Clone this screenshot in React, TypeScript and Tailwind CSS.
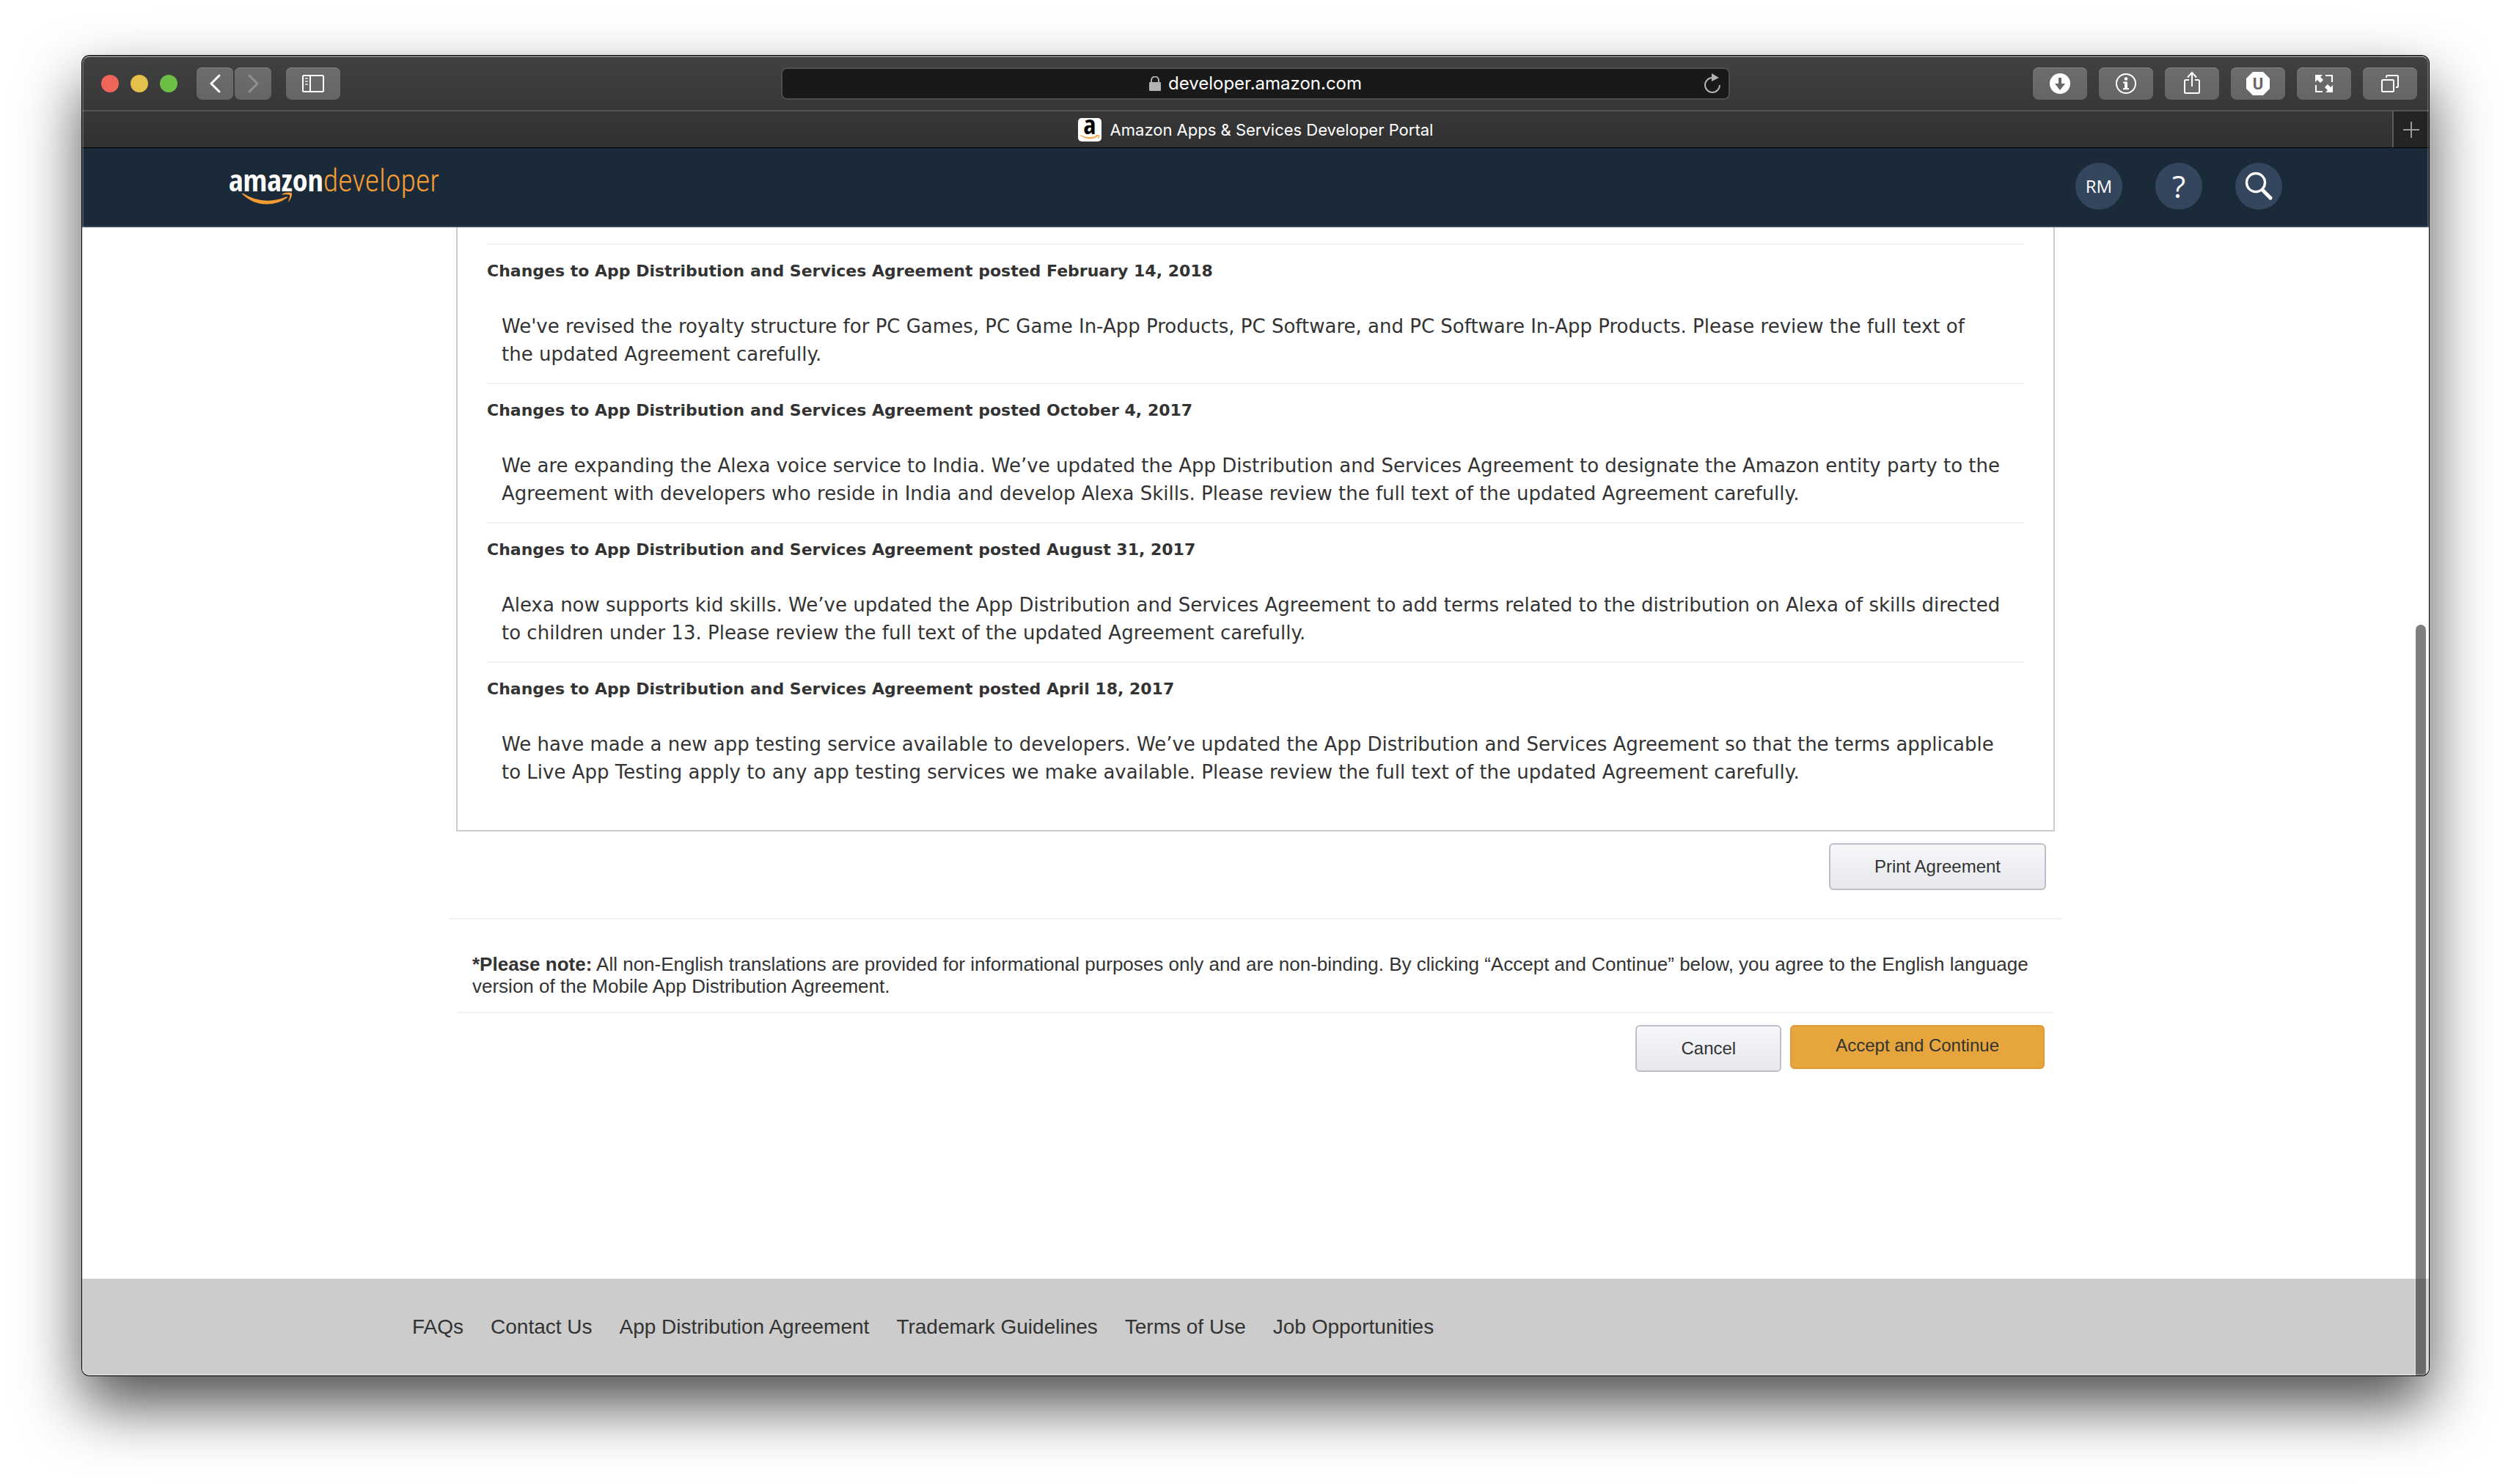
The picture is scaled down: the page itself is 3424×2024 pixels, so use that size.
import type { ReactNode } from "react";

const CHANGES = [
  {
    date: "February 14, 2018",
    body: "We've revised the royalty structure for PC Games, PC Game In-App Products, PC Software, and PC Software In-App Products. Please review the full text of\nthe updated Agreement carefully.",
  },
  {
    date: "October 4, 2017",
    body: "We are expanding the Alexa voice service to India. We’ve updated the App Distribution and Services Agreement to designate the Amazon entity party to the\nAgreement with developers who reside in India and develop Alexa Skills. Please review the full text of the updated Agreement carefully.",
  },
  {
    date: "August 31, 2017",
    body: "Alexa now supports kid skills. We’ve updated the App Distribution and Services Agreement to add terms related to the distribution on Alexa of skills directed\nto children under 13. Please review the full text of the updated Agreement carefully.",
  },
  {
    date: "April 18, 2017",
    body: "We have made a new app testing service available to developers. We’ve updated the App Distribution and Services Agreement so that the terms applicable\nto Live App Testing apply to any app testing services we make available. Please review the full text of the updated Agreement carefully.",
  },
];

const FOOTER_LINKS = [
  "FAQs",
  "Contact Us",
  "App Distribution Agreement",
  "Trademark Guidelines",
  "Terms of Use",
  "Job Opportunities",
];

function Icon({ children }: { children: ReactNode }) {
  return (
    <svg viewBox="-18 -18 36 36" className="size-9" fill="none" stroke="currentColor" strokeWidth="2" aria-hidden="true">
      {children}
    </svg>
  );
}

function ToolButton({ label, narrow = false, dim = false, children }: { label: string; narrow?: boolean; dim?: boolean; children: ReactNode }) {
  return (
    <button
      type="button"
      aria-label={label}
      className={`flex h-11 items-center justify-center rounded-lg bg-linear-to-b from-[#6d6d6d] to-[#656565] shadow-[inset_0_1px_0_#858585] ${narrow ? "w-[50px]" : "w-[74px]"} ${dim ? "text-[#8f8f8f]" : "text-white"}`}
    >
      {children}
    </button>
  );
}

function Toolbar() {
  return (
    <div className="grid grid-cols-[1fr_minmax(0,1294px)_1fr] items-center border-b-2 border-[#555555] bg-linear-to-b from-[#414141] to-[#373737] px-4 pt-4 pb-[14px]">
      <div className="flex items-center pl-2.5">
        <div className="flex gap-4">
          <button type="button" aria-label="Close window" className="size-6 rounded-full bg-[#f0655a]" />
          <button type="button" aria-label="Minimize window" className="size-6 rounded-full bg-[#e3c04c]" />
          <button type="button" aria-label="Zoom window" className="size-6 rounded-full bg-[#6dbe47]" />
        </div>
        <div className="ml-[26px] flex gap-0.5">
          <ToolButton label="Back" narrow>
            <Icon>
              <path d="M6-11-5 0 6 11" strokeWidth="3" strokeLinecap="round" strokeLinejoin="round" />
            </Icon>
          </ToolButton>
          <ToolButton label="Forward" narrow dim>
            <Icon>
              <path d="M-5-11 6 0-5 11" strokeWidth="3" strokeLinecap="round" strokeLinejoin="round" />
            </Icon>
          </ToolButton>
        </div>
        <div className="ml-5">
          <ToolButton label="Show sidebar">
            <Icon>
              <rect x="-14" y="-11" width="28" height="22" rx="1.5" />
              <path d="M-4-11V11" />
              <path d="M-11-7h4M-11-3h4M-11 1h4" stroke="#c8c8c8" />
            </Icon>
          </ToolButton>
        </div>
      </div>

      <div className="grid h-11 grid-cols-[44px_1fr_44px] items-center rounded-lg border-2 border-[#4d4d4d] bg-[#191919]">
        <span />
        <div className="flex items-center justify-center gap-2.5">
          <svg viewBox="0 0 16 20" className="h-5 w-4" aria-hidden="true">
            <rect y="8" width="16" height="12" rx="1" fill="#b2b2b2" />
            <path d="M3 9V5.500a4.500 4.500 0 0 1 10 0V9" fill="none" stroke="#b2b2b2" strokeWidth="2" />
          </svg>
          <input
            type="text"
            aria-label="Address"
            defaultValue="developer.amazon.com"
            className="[field-sizing:content] bg-transparent text-[24px] leading-8 text-white outline-none"
          />
        </div>
        <button type="button" aria-label="Reload page" className="flex items-center justify-center text-[#b2b2b2]">
          <Icon>
            <path d="M10 2A10 10 0 1 1 0-8" />
            <path d="M-1-14 9-8-1-3z" fill="currentColor" stroke="none" />
          </Icon>
        </button>
      </div>

      <div className="flex justify-end gap-4">
        <ToolButton label="Downloads">
          <Icon>
            <circle r="14" fill="currentColor" stroke="none" />
            <path d="M-2-8h4v8h5L0 9-7 0h5z" fill="#666666" stroke="none" />
          </Icon>
        </ToolButton>
        <ToolButton label="Site information">
          <Icon>
            <circle r="13" />
            <circle cy="-6.500" r="2.300" fill="currentColor" stroke="none" />
            <path d="M-4-2.500h6V6h2v2.200h-8V6h2V-.5h-2z" fill="currentColor" stroke="none" />
          </Icon>
        </ToolButton>
        <ToolButton label="Share">
          <Icon>
            <path d="M-4-5h-4.500a1.500 1.500 0 0 0-1.500 1.500v15a1.500 1.500 0 0 0 1.500 1.500h17a1.500 1.500 0 0 0 1.500-1.500v-15A1.500 1.500 0 0 0 8.500-5H4" />
            <path d="M0 4v-18M-6-8.500 0-15l6 6.500" />
          </Icon>
        </ToolButton>
        <ToolButton label="Content blocker">
          <Icon>
            <path d="M-7-16H7l9 9V7l-9 9H-7l-9-9V-7z" fill="currentColor" stroke="none" />
            <text y="8" textAnchor="middle" fill="#666666" stroke="none" className="font-['Roboto',sans-serif] text-[22px] font-bold">
              U
            </text>
          </Icon>
        </ToolButton>
        <ToolButton label="Full page view">
          <Icon>
            <path d="M-12-12h10l-3 3 4 4-4 4-4-4-3 3zM12 12H2l3-3-4-4 4-4 4 4 3-3z" fill="currentColor" stroke="none" />
            <path d="M2-11h9v9M-11 2v9h9" />
          </Icon>
        </ToolButton>
        <ToolButton label="Show all tabs">
          <Icon>
            <rect x="-11" y="-5" width="16" height="16" rx="1.500" />
            <path d="M-5-8v-1.500A1.500 1.500 0 0 1-3.500-11h13A1.500 1.500 0 0 1 11-9.500v13A1.500 1.500 0 0 1 9.500 5H8" />
          </Icon>
        </ToolButton>
      </div>
    </div>
  );
}

function TabBar() {
  return (
    <div className="grid h-[50px] grid-cols-[50px_1fr_50px] border-b border-black bg-linear-to-b from-[#373737] to-[#313131]">
      <span />
      <div className="flex items-center justify-center gap-3">
        <svg viewBox="0 0 32 32" className="size-8 overflow-visible" aria-hidden="true">
          <rect width="32" height="32" rx="5" fill="#ffffff" />
          <text x="16" y="22" textAnchor="middle" fill="#000000" className="font-['Open_Sans_Condensed','Open_Sans',sans-serif] text-[36px] font-bold">
            a
          </text>
          <path d="M3 23.500q12 8.500 24 1.500l-.5-.8q-11.500 5-23.500-.7z" fill="#f2a649" stroke="#f2a649" strokeWidth=".8" />
          <path d="M24.500 23.800q3.500-.8 4.300 0 .4 1.500-1.300 4" fill="none" stroke="#f2a649" strokeWidth="1.200" />
        </svg>
        <span className="text-[22px] leading-8 text-white">Amazon Apps &amp; Services Developer Portal</span>
      </div>
      <button type="button" aria-label="New tab" className="flex items-center justify-center border-l-2 border-[#5a5a5a] bg-[#242424] text-[#9a9a9a]">
        <Icon>
          <path d="M-11 0h22M0-11v22" />
        </Icon>
      </button>
    </div>
  );
}

function SiteHeader() {
  return (
    <header className="flex items-center justify-between border-b-2 border-[#34465e] bg-[#1b2a38] px-[200px]">
      <a href="#home" aria-label="amazondeveloper" className="relative flex items-baseline pb-[18px] text-[42px] leading-[48px]">
        <span className="font-['Open_Sans_Condensed','Open_Sans',sans-serif] font-bold text-white">amazon</span>
        <span className="font-['Roboto_Condensed','Roboto',sans-serif] font-light text-[#f79c34]">developer</span>
        <svg viewBox="0 0 90 18" className="absolute top-[41px] left-0 h-[18px] w-[90px]" aria-hidden="true">
          <path d="M18.500 1.500q-.8.500.2 1.500 14 13.500 33 13.500 15.500 0 27.500-8.500 2-1.700-.5-1.700Q66 11.500 53 11.700 35 11.700 20 2z" fill="#f79c34" />
          <path d="M72.500 2.800q4-2.600 9.500-2.300 3.700.2 4 1 .8 5-4.300 11.500-.9.900-.5-.5 2.400-6.500 1.800-8.300-1.500-1.500-10-.6-1.200 0-.5-.8z" fill="#f79c34" />
        </svg>
      </a>
      <div className="flex gap-[45px] pt-5 pb-[22px] font-['Open_Sans',sans-serif] text-white">
        <button type="button" aria-label="Account RM" className="flex size-16 items-center justify-center rounded-full bg-[#34465e] text-[24px] leading-8">
          RM
        </button>
        <button type="button" aria-label="Help ?" className="flex size-16 items-center justify-center rounded-full bg-[#34465e] text-[42px] leading-8">
          ?
        </button>
        <button type="button" aria-label="Search" className="flex size-16 items-center justify-center rounded-full bg-[#34465e]">
          <svg viewBox="-20 -20 40 40" className="size-10" fill="none" stroke="currentColor" aria-hidden="true">
            <circle cx="-4" cy="-5" r="12.500" strokeWidth="3.400" />
            <path d="m5 5 11 11" strokeWidth="5" strokeLinecap="round" />
          </svg>
        </button>
      </div>
    </header>
  );
}

function GreyButton({ children }: { children: ReactNode }) {
  return (
    <button
      type="button"
      className="h-16 rounded-md border-2 border-[#bcbec9] bg-linear-to-b from-[#f6f7f9] to-[#e7e8ec] px-[60px] text-[24px] leading-8"
    >
      {children}
    </button>
  );
}

function Agreement() {
  return (
    <main className="mx-auto w-full max-w-[2200px] flex-1 pb-12 font-['Liberation_Sans',Arial,sans-serif] text-[#333333]">
      <section className="mx-2.5 border-2 border-t-0 border-[#cccccc] px-10 pt-[22px] pb-10 font-['DejaVu_Sans',Verdana,sans-serif]">
        {CHANGES.map((change) => (
          <article key={change.date} className="border-t-2 border-[#f2f2f2] pt-[17px] pb-5 leading-[38px]">
            <h2 className="text-[22px] font-bold">Changes to App Distribution and Services Agreement posted {change.date}</h2>
            <p className="mt-[37px] pl-5 text-[26px] whitespace-pre-line">{change.body}</p>
          </article>
        ))}
      </section>
      <div className="flex justify-end pt-4 pr-[22px] pb-[38px]">
        <GreyButton>Print Agreement</GreyButton>
      </div>
      <div className="border-t-2 border-[#f0f0f0] px-8 pt-[46px] pb-5 text-[26px] leading-[30px]">
        <p>
          <strong>*Please note:</strong> All non-English translations are provided for informational purposes only and are
          non-binding. By clicking “Accept and Continue” below, you agree to the English language version of the Mobile App
          Distribution Agreement.
        </p>
      </div>
      <div className="mx-3 flex items-start justify-end gap-3 border-t-2 border-[#f2f2f2] pt-4 pr-3">
        <GreyButton>Cancel</GreyButton>
        <button type="button" className="h-15 rounded-md border-2 border-[#dd9a35] bg-[#e7a63d] px-[60px] pb-1 text-[24px] leading-8">
          Accept and Continue
        </button>
      </div>
    </main>
  );
}

export default function App() {
  return (
    <div className="flex min-h-screen flex-col bg-white px-28 pt-19 pb-[148px] font-['Inter',sans-serif]">
      <div className="relative flex flex-1 flex-col overflow-hidden rounded-[10px] bg-white shadow-[0_0_0_1px_#000000,0_40px_84px_rgba(0,0,0,0.7)]">
        <Toolbar />
        <TabBar />
        <SiteHeader />
        <div className="relative flex flex-1 flex-col">
          <Agreement />
          <footer className="bg-[#cccccc] py-[46px] pl-[450px] font-['Liberation_Sans',Arial,sans-serif] text-[28px] leading-10 text-[#333333]">
            <nav className="flex flex-wrap gap-x-[37px]">
              {FOOTER_LINKS.map((link) => (
                <a key={link} href={`#${link.toLowerCase().replace(/ /g, "-")}`}>
                  {link}
                </a>
              ))}
            </nav>
          </footer>
          {/* Overlay scrollbar: translucent track and thumb */}
          <div className="pointer-events-none absolute inset-y-0 right-0 flex w-5 flex-col bg-white/20 pr-1 pl-0.5">
            <span className="flex-[542]" />
            <span className="flex-[1024] rounded-t-full bg-black/50" />
          </div>
        </div>
        {/* Window edge highlight */}
        <div className="pointer-events-none absolute inset-0 rounded-[10px] border-2 border-white/20 border-t-white/35" />
      </div>
    </div>
  );
}
